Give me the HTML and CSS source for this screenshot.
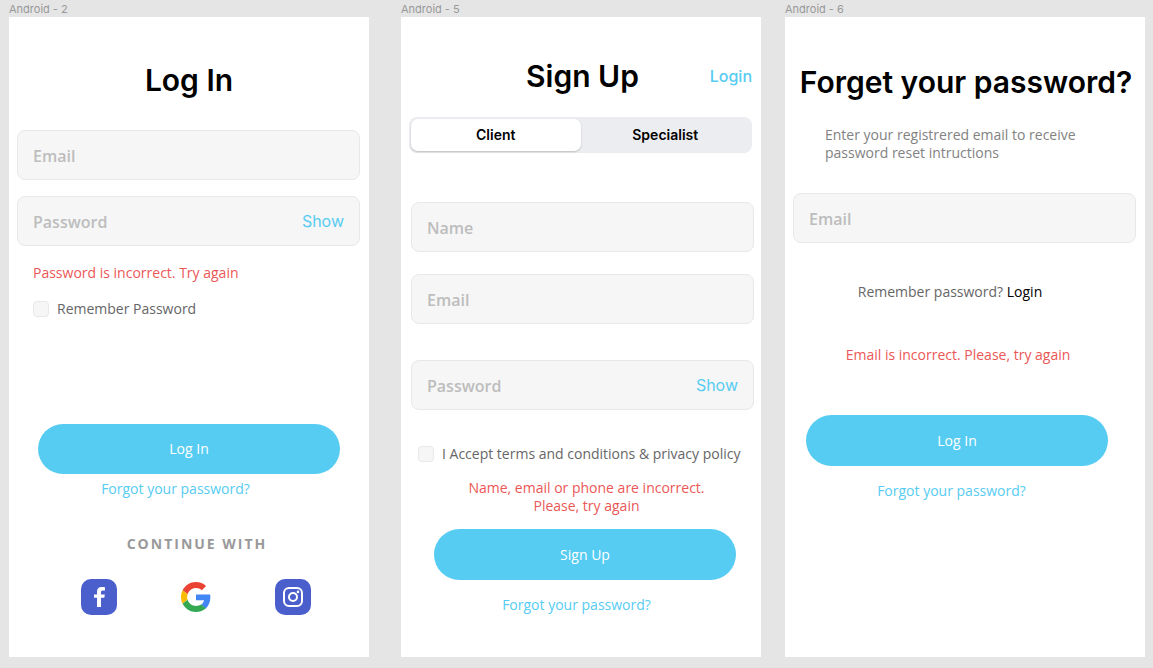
FILE: index.html
```html
<!DOCTYPE html>
<html lang="en">
<head>
<meta charset="utf-8">
<meta name="viewport" content="width=device-width, initial-scale=1">
<title>Account screens</title>
<link rel="stylesheet" href="styles.css">
</head>
<body>
<main class="canvas">
  <section class="frame">
    <p class="frame-name">Android - 2</p>
    <form class="screen login">
      <h1 class="title">Log In</h1>
      <div class="field"><input class="field-input" type="email" placeholder="Email" aria-label="Email"></div>
      <div class="field">
        <input class="field-input" type="password" placeholder="Password" aria-label="Password">
        <button class="show" type="button">Show</button>
      </div>
      <p class="error">Password is incorrect. Try again</p>
      <label class="check"><input class="box" type="checkbox">Remember Password</label>
      <button class="primary" type="submit">Log In</button>
      <p class="forgot"><a class="link" href="#">Forgot your password?</a></p>
      <p class="continue">CONTINUE WITH</p>
      <div class="socials">
        <a class="social" href="#" aria-label="Facebook">
          <svg viewBox="0 0 36 36" width="36" height="36"><rect width="36" height="36" rx="10" fill="#4a5fcb"/><path fill="#fff" d="M16 28v-9.200h-3V15.400h3v-2.800c0-3 1.800-4.600 4.500-4.600 1.300 0 2.400.1 3.500.2v3.300h-2.100c-1.500 0-1.900.8-1.900 1.900v2h3.800l-.5 3.400H20V28z"/></svg>
        </a>
        <a class="social" href="#" aria-label="Google">
          <svg viewBox="0 0 48 48" width="30" height="30"><path fill="#ea4335" d="M24 9.500c3.540 0 6.710 1.220 9.210 3.600l6.850-6.850C35.900 2.380 30.470 0 24 0 14.620 0 6.510 5.380 2.560 13.220l7.980 6.190C12.430 13.720 17.740 9.500 24 9.500z"/><path fill="#4285f4" d="M46.980 24.550c0-1.570-.15-3.090-.38-4.550H24v9.020h12.940c-.58 2.960-2.260 5.480-4.780 7.180l7.730 6c4.510-4.180 7.090-10.360 7.090-17.650z"/><path fill="#fbbc05" d="M10.530 28.590c-.48-1.450-.76-2.990-.76-4.590s.27-3.140.76-4.590l-7.980-6.190C.92 16.460 0 20.120 0 24c0 3.880.92 7.540 2.560 10.780l7.970-6.190z"/><path fill="#34a853" d="M24 48c6.480 0 11.930-2.130 15.890-5.810l-7.730-6c-2.150 1.450-4.920 2.300-8.160 2.300-6.260 0-11.570-4.220-13.470-9.910l-7.980 6.190C6.510 42.620 14.620 48 24 48z"/></svg>
        </a>
        <a class="social" href="#" aria-label="Instagram">
          <svg viewBox="0 0 36 36" width="36" height="36"><rect width="36" height="36" rx="10" fill="#4a5fcb"/><rect x="9" y="9" width="18" height="18" rx="5" fill="none" stroke="#fff" stroke-width="2"/><circle cx="18" cy="18" r="4" fill="none" stroke="#fff" stroke-width="2"/><circle cx="23" cy="12.900" r="1.300" fill="#fff"/></svg>
        </a>
      </div>
    </form>
  </section>

  <section class="frame frame-wide">
    <p class="frame-name">Android - 5</p>
    <form class="screen signup">
      <header class="top">
        <h1 class="title">Sign Up</h1>
        <a class="top-link" href="#">Login</a>
      </header>
      <div class="segments">
        <button class="segment segment-on" type="button" aria-pressed="true">Client</button>
        <button class="segment" type="button" aria-pressed="false">Specialist</button>
      </div>
      <div class="field"><input class="field-input" type="text" placeholder="Name" aria-label="Name"></div>
      <div class="field"><input class="field-input" type="email" placeholder="Email" aria-label="Email"></div>
      <div class="field field-last">
        <input class="field-input" type="password" placeholder="Password" aria-label="Password">
        <button class="show" type="button">Show</button>
      </div>
      <label class="check"><input class="box" type="checkbox">I Accept terms and conditions &amp; privacy policy</label>
      <p class="error">Name, email or phone are incorrect.<br>Please, try again</p>
      <button class="primary" type="submit">Sign Up</button>
      <p class="forgot"><a class="link" href="#">Forgot your password?</a></p>
    </form>
  </section>

  <section class="frame">
    <p class="frame-name">Android - 6</p>
    <form class="screen reset">
      <h1 class="title">Forget your password?</h1>
      <p class="hint">Enter your registrered email to receive<br>password reset intructions</p>
      <div class="field"><input class="field-input" type="email" placeholder="Email" aria-label="Email"></div>
      <p class="remember">Remember password? <a class="dark-link" href="#">Login</a></p>
      <p class="error">Email is incorrect. Please, try again</p>
      <button class="primary" type="submit">Log In</button>
      <p class="forgot"><a class="link" href="#">Forgot your password?</a></p>
    </form>
  </section>
</main>
</body>
</html>
```
FILE: styles.css
```css
* { box-sizing: border-box; margin: 0; }

body {
  background: #e5e5e5;
  color: #666;
  font: 14px/18px "Open Sans", "Noto Sans", sans-serif;
}

a { text-decoration: none; }
button { border: 0; background: none; padding: 0; cursor: pointer; }

.canvas {
  display: flex;
  min-height: 100vh;
  padding: 0 8px 11px 9px;
  gap: 24px;
}
.frame { flex: 1; display: flex; flex-direction: column; }
.frame-wide { margin-left: 8px; }
.frame-name {
  padding-top: 1px;
  color: #999;
  font: 11px/16px Inter, sans-serif;
}
.screen {
  flex: 1;
  display: flex;
  flex-direction: column;
  background: #fff;
}

.title {
  color: #000;
  font: 600 30px/36px Inter, sans-serif;
  text-align: center;
}

.field {
  display: flex;
  align-items: center;
  height: 50px;
  padding: 0 15px;
  background: #f6f6f6;
  border: 1px solid #e8e8e8;
  border-radius: 8px;
}
.field-input {
  flex: 1;
  min-width: 0;
  padding: 2px 0 0;
  border: 0;
  outline: 0;
  background: none;
  color: #333;
  font: 600 16px/22px "Open Sans", "Noto Sans", sans-serif;
}
.field-input::placeholder { color: #bdbdbd; opacity: 1; }
.show { color: #56ccf2; font: 16px/20px Inter, sans-serif; }

.error { color: #eb5757; text-align: center; }

.check { display: flex; align-items: center; gap: 8px; }
.box {
  appearance: none;
  width: 16px;
  height: 16px;
  margin: 0;
  background: #f6f6f6;
  border: 1px solid #e8e8e8;
  border-radius: 4px;
}
.box:checked { background: #56ccf2; }

.primary {
  height: 51px;
  border-radius: 26px;
  background: #56ccf2;
  color: #fff;
  font: 500 14px/18px "Open Sans", "Noto Sans", sans-serif;
}
.forgot { margin-top: 16px; text-align: center; }
.link { color: #56ccf2; font-weight: 500; }

/* Log in */
.login { padding-top: 45px; }
.login .title { margin-bottom: 16px; }
.login .field { margin: 16px 9px 0 8px; }
.login .error { margin: 18px 24px 0; text-align: left; }
.login .check { margin: 18px 24px 0; }
.login .primary { height: 50px; margin: 106px 29px 0; }
.login .forgot { margin-top: 6px; padding-right: 27px; }
.continue {
  margin-top: 37px;
  padding-left: 16px;
  color: #999;
  font-weight: 700;
  letter-spacing: 2px;
  text-align: center;
}
.socials {
  display: flex;
  justify-content: space-between;
  margin: 26px 58px 0 72px;
}
.social {
  display: flex;
  align-items: center;
  justify-content: center;
  width: 36px;
  height: 36px;
}

/* Sign up */
.signup { padding-top: 41px; }
.top {
  display: grid;
  grid-template-columns: 1fr auto 1fr;
  align-items: center;
  padding: 0 9px 0 12px;
}
.top .title { grid-column: 2; }
.top-link {
  justify-self: end;
  color: #56ccf2;
  font: 500 16px/20px Inter, sans-serif;
}
.segments {
  display: flex;
  height: 36px;
  margin: 23px 9px 27px 8px;
  padding: 2px;
  background: #ecedf1;
  border-radius: 8px;
}
.segment {
  flex: 1;
  border-radius: 7px;
  color: #000;
  font: 600 14px/18px Inter, sans-serif;
}
.segment-on { background: #fff; box-shadow: 0 1px 2px rgba(0, 0, 0, 0.2); }
.signup .field { margin: 22px 7px 0 10px; }
.signup .field-last { margin-top: 36px; }
.signup .check { margin: 35px 0 0 17px; }
.signup .error { margin-top: 16px; padding-left: 11px; }
.signup .primary { margin: 14px 25px 0 33px; }
.signup .forgot { padding-right: 9px; }

/* Password reset */
.reset { padding-top: 47px; }
.reset .title { padding-left: 2px; }
.hint { margin: 26px 0 0 40px; color: #828282; }
.reset .field { margin: 31px 9px 0 8px; }
.remember { margin-top: 40px; padding-right: 30px; text-align: center; }
.dark-link { color: #000; }
.reset .error { margin-top: 45px; padding-right: 14px; }
.reset .primary { margin: 51px 37px 0 21px; }
.reset .forgot { padding-right: 27px; }
```
